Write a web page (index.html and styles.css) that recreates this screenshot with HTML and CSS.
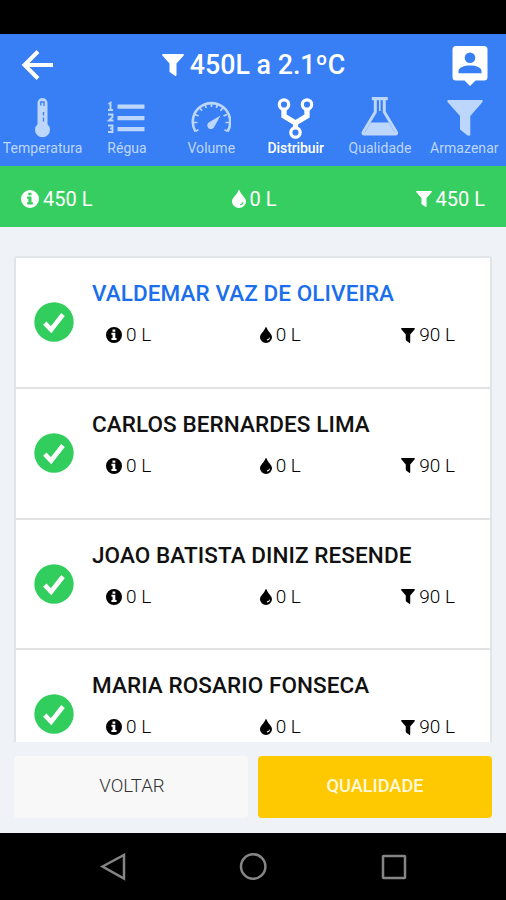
FILE: index.html
```html
<!DOCTYPE html>
<html lang="pt-BR">
<head>
<meta charset="utf-8">
<title>Distribuir</title>
<link rel="stylesheet" href="styles.css">
</head>
<body>
<svg class="defs" aria-hidden="true">
  <symbol id="filter" viewBox="0 0 22 22" preserveAspectRatio="none"><path d="M1 0H21Q22.500 0 21.500 1.800L14.500 9.500V21Q14.300 22.400 12.900 21.700L8 18.300Q7.500 18 7.500 17.400V9.500L.5 1.800Q-.5 0 1 0Z"/></symbol>
  <symbol id="info" viewBox="0 0 18 18"><path fill-rule="evenodd" d="M9 0a9 9 0 1 0 0 18a9 9 0 0 0 0-18ZM7.300 2.700h3.200v2.600H7.300ZM6.100 6.600h4.400v5.700h1.400v2.200H6.100v-2.200h1.300V8.800H6.100Z"/></symbol>
  <symbol id="drop" viewBox="0 0 14 18" preserveAspectRatio="none"><path fill-rule="evenodd" d="M6.200.8Q7-.7 7.800.8C9 5 14 7.500 14 11.500A7 6.500 0 0 1 0 11.500C0 7.500 5 5 6.200.8ZM11 11.800Q10.500 13.500 8 14.200Q8 15.300 9 15.200Q11.500 14.300 11.600 12Z"/></symbol>
  <symbol id="check" viewBox="0 0 40 40"><circle cx="20" cy="20" r="19.700"/><path d="M10.800 21.200l6.300 6.500L29 12.500" fill="none" stroke="#fff" stroke-width="4.600"/></symbol>
</svg>
<div class="status"></div>
<header class="header">
  <div class="titlebar">
    <svg class="back" viewBox="0 0 32 32"><path d="M17 2.500L3.500 16l13.500 13.500M4 16h28" fill="none" stroke="#fff" stroke-width="4"/></svg>
    <h1 class="title"><svg class="title-icon"><use href="#filter"/></svg><span>450L a 2.1ºC</span></h1>
    <svg class="contact" viewBox="0 0 36 42"><path fill="#fff" d="M4 1H32Q35.500 1 35.500 4.500V32Q35.500 35.500 32 35.500H23.500L18 41L12.500 35.500H4Q.5 35.500 .5 32V4.500Q.5 1 4 1Z"/><circle cx="18" cy="12.800" r="5.300" fill="#387ef5"/><path fill="#387ef5" d="M6.500 28.200V26C6.500 22.500 12 20.500 18 20.500S29.500 22.500 29.500 26V28.200Z"/></svg>
  </div>
  <nav class="tabs">
    <a class="tab"><svg viewBox="0 0 40 42"><path fill="currentColor" fill-rule="evenodd" d="M15.500 6a5 5 0 0 1 10 0V27.200a7.500 7.500 0 1 1-10 0Z"/><path d="M18.800 8.500V5h3.200v4M21.500 15v3.500M21.500 20.500v4" fill="none" stroke="#387ef5" stroke-width="1.300"/></svg><span class="tab-label">Temperatura</span></a>
    <a class="tab"><svg viewBox="0 0 40 42"><path fill="currentColor" d="M11.500 7.500h27v4.200h-27ZM11.500 19h27v4.200h-27ZM11.500 30h27v4.200h-27Z"/><path d="M2.500 7l2-1.200V13M2 13h5M2 17.500h4.500v2.500L3 23.500h4.500M2 28.500h4.500v3H4h2.500v3.500H2" fill="none" stroke="currentColor" stroke-width="1.900"/></svg><span class="tab-label">Régua</span></a>
    <a class="tab"><svg viewBox="0 0 40 42"><path d="M4.500 34.500A18.700 18.700 0 1 1 36.500 34.500" fill="none" stroke="currentColor" stroke-width="2.600"/><path d="M2 25.500h4.500M34.500 25.500h4M4.200 17.500l3.500 1.600M36 17.500l-3.500 1.600M8.500 11l2.700 2.700M32 11l-2.700 2.700M14 7.500l1.200 3.500M26.500 7.500l-1.200 3.500M20.500 6v4M4.500 34.200l3-1.500M36.500 34.200l-3-1.500" stroke="currentColor" stroke-width="1.700"/><path d="M29.500 18.500L23.500 29.500A3.700 3.700 0 1 1 18.500 25Z" fill="currentColor"/></svg><span class="tab-label">Volume</span></a>
    <a class="tab tab-active"><svg viewBox="0 0 40 42"><g fill="none" stroke="currentColor"><circle cx="9" cy="7.500" r="4.700" stroke-width="3.200"/><circle cx="32" cy="7.500" r="4.700" stroke-width="3.200"/><circle cx="20.500" cy="35.500" r="4.700" stroke-width="3.200"/><path d="M9 12.500V19L20.500 26L32 19v-6.500M20.500 24v6.500" stroke-width="5.300"/></g></svg><span class="tab-label">Distribuir</span></a>
    <a class="tab"><svg viewBox="0 0 40 42"><path d="M16.300 2V15L4.300 35Q3.300 37 5.300 37H36.300Q38.300 37 37.300 35L25.300 15V2" fill="none" stroke="currentColor" stroke-width="3"/><path d="M12.800 0h16v3.200H12.800Z" fill="currentColor"/><path d="M11.800 25.500H29.800L37 37.500H4.600Z" fill="currentColor"/><path d="M20.800 3V14" stroke="currentColor" stroke-width="1.600"/></svg><span class="tab-label">Qualidade</span></a>
    <a class="tab"><svg viewBox="0 0 40 42"><path fill="currentColor" d="M4 3H38Q39 3 38.500 5L26.300 19V38.500H23.500L16 32.500V19L3.500 5Q3 3 4 3Z"/></svg><span class="tab-label">Armazenar</span></a>
  </nav>
</header>
<div class="summary">
  <div class="stat"><svg class="i-info"><use href="#info"/></svg><span>450 L</span></div>
  <div class="stat"><svg class="i-drop"><use href="#drop"/></svg><span>0 L</span></div>
  <div class="stat"><svg class="i-filter"><use href="#filter"/></svg><span>450 L</span></div>
</div>
<main class="content">
  <section class="list">
    <article class="row">
      <svg class="check"><use href="#check"/></svg>
      <div class="info"><h2 class="name name-selected">VALDEMAR VAZ DE OLIVEIRA</h2>
        <div class="stats"><div class="stat"><svg class="i-info"><use href="#info"/></svg><span>0 L</span></div><div class="stat stat-middle"><svg class="i-drop"><use href="#drop"/></svg><span>0 L</span></div><div class="stat"><svg class="i-filter"><use href="#filter"/></svg><span>90 L</span></div></div></div>
    </article>
    <article class="row">
      <svg class="check"><use href="#check"/></svg>
      <div class="info"><h2 class="name">CARLOS BERNARDES LIMA</h2>
        <div class="stats"><div class="stat"><svg class="i-info"><use href="#info"/></svg><span>0 L</span></div><div class="stat stat-middle"><svg class="i-drop"><use href="#drop"/></svg><span>0 L</span></div><div class="stat"><svg class="i-filter"><use href="#filter"/></svg><span>90 L</span></div></div></div>
    </article>
    <article class="row">
      <svg class="check"><use href="#check"/></svg>
      <div class="info"><h2 class="name">JOAO BATISTA DINIZ RESENDE</h2>
        <div class="stats"><div class="stat"><svg class="i-info"><use href="#info"/></svg><span>0 L</span></div><div class="stat stat-middle"><svg class="i-drop"><use href="#drop"/></svg><span>0 L</span></div><div class="stat"><svg class="i-filter"><use href="#filter"/></svg><span>90 L</span></div></div></div>
    </article>
    <article class="row">
      <svg class="check"><use href="#check"/></svg>
      <div class="info"><h2 class="name">MARIA ROSARIO FONSECA</h2>
        <div class="stats"><div class="stat"><svg class="i-info"><use href="#info"/></svg><span>0 L</span></div><div class="stat stat-middle"><svg class="i-drop"><use href="#drop"/></svg><span>0 L</span></div><div class="stat"><svg class="i-filter"><use href="#filter"/></svg><span>90 L</span></div></div></div>
    </article>
  </section>
  <div class="actions">
    <button class="btn btn-light">VOLTAR</button>
    <button class="btn btn-primary">QUALIDADE</button>
  </div>
</main>
<footer class="navbar">
  <svg viewBox="0 0 28 28"><path d="M3.500 13.500L25 2V25.500Z"/></svg>
  <svg viewBox="0 0 28 28"><circle cx="14.200" cy="13.500" r="12.200"/></svg>
  <svg viewBox="0 0 28 28"><rect x="3" y="3" width="22" height="22" rx=".5"/></svg>
</footer>
</body>
</html>
```
FILE: styles.css
```css
* { box-sizing: border-box; }
body { margin: 0; width: 506px; height: 900px; display: flex; flex-direction: column; overflow: hidden; background: #eff3f8; font-family: Roboto, "Liberation Sans", sans-serif; color: #111; }
svg { display: block; flex: none; fill: currentColor; }
.defs { width: 0; height: 0; position: absolute; }
.status { height: 34px; flex: none; background: #000; }
.header { height: 131.500px; flex: none; background: #387ef5; color: #fff; }
.titlebar { height: 62px; display: flex; align-items: center; justify-content: space-between; padding: 0 18px 0 21px; }
.back { width: 32px; height: 32px; }
.title { display: flex; align-items: center; gap: 6px; margin: 0 0 0 2px; font-size: 26.800px; font-weight: 500; line-height: 32px; }
.title-icon { width: 22px; height: 22px; }
.contact { width: 36px; height: 42px; margin-top: 1px; }
.tabs { display: grid; grid-template-columns: repeat(6, 1fr); }
.tab { display: flex; flex-direction: column; align-items: center; color: #bdd6fc; font-size: 14px; line-height: 16px; }
.tab svg { width: 40px; height: 42px; margin-top: 1px; }
.tab-label { margin: 1px 0 0 1px; letter-spacing: .05px; white-space: nowrap; }
.tab-active { color: #fff; }
.tab-active .tab-label { font-weight: 500; letter-spacing: -.1px; }
.stat { display: flex; align-items: center; gap: 4px; white-space: nowrap; }
.summary { height: 61.500px; flex: none; display: flex; justify-content: space-between; align-items: center; padding: 5px 21px 0; background: #37ce61; color: #fff; font-size: 20px; }
.summary .i-info { width: 18px; height: 18px; }
.summary .i-drop { width: 14px; height: 18px; }
.summary .i-filter { width: 16px; height: 16px; }
.content { height: 606px; flex: none; display: flex; flex-direction: column; padding: 29px 14px 15px; }
.list { height: 486px; flex: none; overflow: hidden; border: 2px solid #e2e5e8; border-bottom: 0; border-radius: 3px 3px 0 0; background: #fff; }
.row { height: 130.750px; display: flex; border-bottom: 2px solid #e1e2e3; padding: 21px 0 0 18px; }
.check { width: 40px; height: 40px; margin-top: 23px; color: #31ce5d; }
.info { width: 363px; margin-left: 18px; }
.name { margin: 0; font-size: 22.500px; line-height: 28px; font-weight: 500; letter-spacing: .08px; white-space: nowrap; }
.name-selected { color: #1b6fec; }
.stats { display: flex; justify-content: space-between; padding-left: 14px; margin-top: 16px; font-size: 19px; font-weight: 300; line-height: 24px; }
.stats .i-info { width: 16px; height: 16px; }
.stats .i-drop { width: 12px; height: 16px; }
.stats .i-filter { width: 14px; height: 15px; }
.stats .stat { color: #000; }
.stats .stat-middle { padding-left: 8px; }
.actions { display: grid; grid-template-columns: 1fr 1fr; gap: 10px; height: 62px; margin-top: 14px; }
.btn { border: 0; border-radius: 4px; padding: 0 0 3px 2px; font: 400 18.700px Roboto, sans-serif; }
.btn-light { background: #f8f8f8; color: #333; font-weight: 300; }
.btn-primary { padding-left: 0; background: #ffc900; color: #fff8dc; font-size: 18.200px; font-weight: 500; }
.navbar { flex: 1; display: flex; justify-content: center; gap: 112.500px; padding-top: 20px; background: #000; color: #858585; }
.navbar svg { width: 28px; height: 28px; fill: none; stroke: currentColor; stroke-width: 2.500; }
```
